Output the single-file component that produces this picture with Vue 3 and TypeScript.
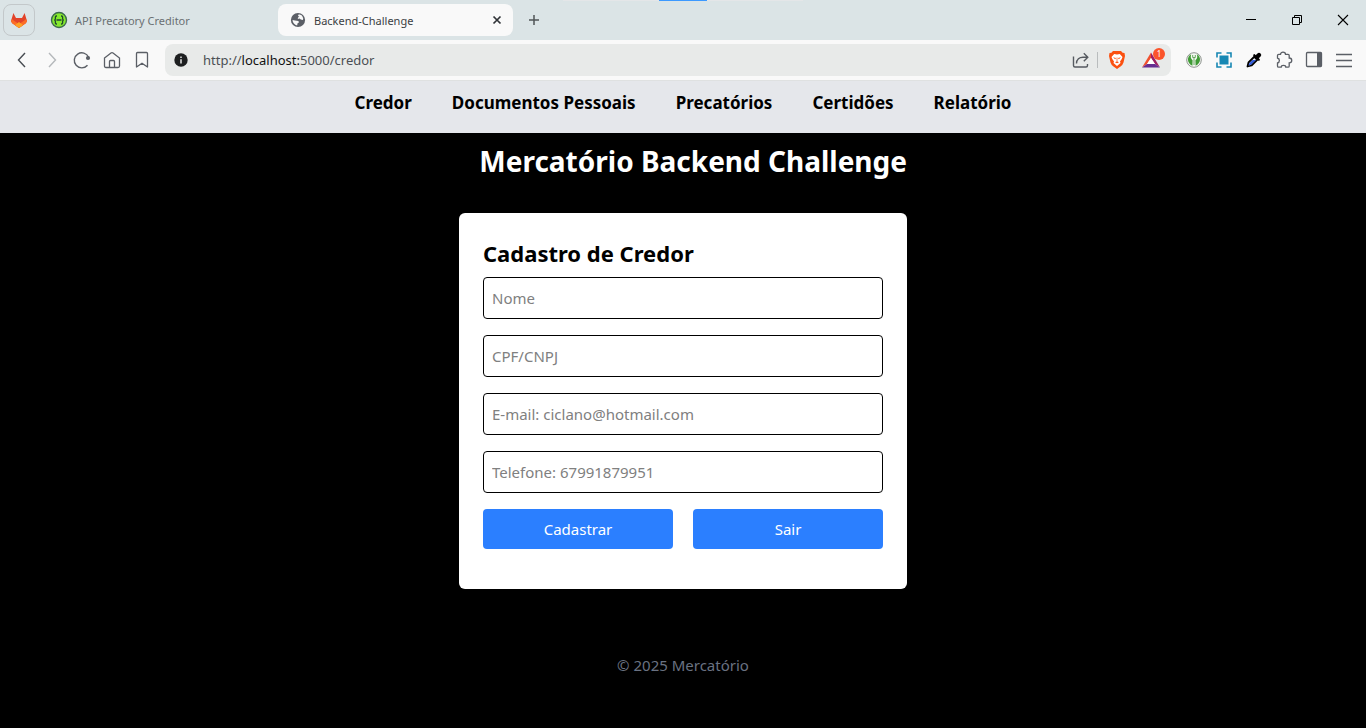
<script setup lang="ts">
import { ref } from 'vue'

interface Field {
  id: string
  type: string
  placeholder: string
}

const links: string[] = ['Credor', 'Documentos Pessoais', 'Precatórios', 'Certidões', 'Relatório']

const fields: Field[] = [
  { id: 'nome', type: 'text', placeholder: 'Nome' },
  { id: 'documento', type: 'text', placeholder: 'CPF/CNPJ' },
  { id: 'email', type: 'email', placeholder: 'E-mail: ciclano@hotmail.com' },
  { id: 'telefone', type: 'tel', placeholder: 'Telefone: 67991879951' },
]

const values = ref<Record<string, string>>({ nome: '', documento: '', email: '', telefone: '' })
</script>

<template>
  <div class="window">
    <header class="browser">
      <div class="tabstrip">
        <div class="loader"><span></span></div>
        <button class="pinned" type="button" aria-label="GitLab">
          <svg width="18" height="18" viewBox="0 0 18 18">
            <path d="M1 10 L3.4 2 L6 7 H12 L14.6 2 L17 10 L16 12 L9 17 L2 12Z" fill="#e24329" />
            <path d="M1 10 L2 8 L9 17 L2 12Z M17 10 L16 8 L9 17 L16 12Z" fill="#fc6d26" />
            <path d="M2 8.5 L9 13 L16 8.5 L16 12 L9 17 L2 12Z" fill="#fc6d26" />
            <path d="M5 14 L9 11 L13 14 L9 17Z" fill="#fca326" />
          </svg>
        </button>
        <button class="tab" type="button">
          <svg width="18" height="18" viewBox="0 0 18 18">
            <circle cx="9" cy="9" r="7.5" fill="#85ea2d" stroke="#3d6b4e" stroke-width="1.4" />
            <path d="M7 5 H6.4 Q5.4 5 5.4 6 V7.8 Q5.4 9 4.2 9 Q5.4 9 5.4 10.2 V12 Q5.4 13 6.4 13 H7 M11 5 H11.6 Q12.6 5 12.6 6 V7.8 Q12.6 9 13.8 9 Q12.6 9 12.6 10.2 V12 Q12.6 13 11.6 13 H11 M6.5 9 H11.5" fill="none" stroke="#22492f" stroke-width="1.3" />
          </svg>
          <span>API Precatory Creditor</span>
        </button>
        <div class="tab active">
          <svg width="16" height="16" viewBox="0 0 16 16">
            <circle cx="8" cy="8" r="7.1" fill="#5b5f66" />
            <path d="M8.5 2.6 C9.8 2.3 11.2 2.9 12.2 4 L13.2 6.3 L13 8 L10.8 7.5 L9.6 6.6 L7.8 6.9 L8 5.6 L9.4 4.8 L8 4Z M2.5 8 L5 8.4 L8.3 9 L9.1 10.3 L7.6 11.3 L7.1 13.4 C4.6 13 2.7 10.6 2.5 8Z" fill="#f9f9f9" />
          </svg>
          <span>Backend-Challenge</span>
          <button class="close" type="button" aria-label="Fechar guia">
            <svg width="10" height="10" viewBox="0 0 10 10"><path d="M1.5 1.5 L8.5 8.5 M8.5 1.5 L1.5 8.5" stroke="#303438" stroke-width="1.7" /></svg>
          </button>
        </div>
        <button class="newtab" type="button" aria-label="Nova guia">
          <svg width="12" height="12" viewBox="0 0 12 12"><path d="M6 1 V11 M1 6 H11" stroke="#505457" stroke-width="1.5" /></svg>
        </button>
        <div class="controls">
          <button type="button" aria-label="Minimizar">
            <svg width="12" height="12" viewBox="0 0 12 12"><path d="M1 5.5 H11" stroke="#000" /></svg>
          </button>
          <button type="button" aria-label="Restaurar">
            <svg width="12" height="12" viewBox="0 0 12 12"><path d="M1.5 3.5 H8.5 V10.5 H1.5Z M3.5 3.5 V1.5 H10.5 V8.5 H8.5" fill="none" stroke="#000" /></svg>
          </button>
          <button type="button" aria-label="Fechar">
            <svg width="12" height="12" viewBox="0 0 12 12"><path d="M1 1 L11 11 M11 1 L1 11" stroke="#000" stroke-width="1.1" /></svg>
          </button>
        </div>
      </div>

      <div class="toolbar">
        <div class="navigation">
          <button type="button" aria-label="Voltar">
            <svg width="20" height="20" viewBox="0 0 20 20"><path d="M13 3 L6.5 10 L13 17" fill="none" stroke="#484c52" stroke-width="1.4" /></svg>
          </button>
          <button type="button" aria-label="Avançar">
            <svg width="20" height="20" viewBox="0 0 20 20"><path d="M7 3 L13.5 10 L7 17" fill="none" stroke="#b5b8bb" stroke-width="1.4" /></svg>
          </button>
          <button type="button" aria-label="Recarregar">
            <svg width="20" height="20" viewBox="0 0 20 20"><path d="M15.5 15.2 A7.5 7.5 0 1 1 16.6 7.2" fill="none" stroke="#5b5f66" stroke-width="1.4" /><circle cx="16" cy="8" r="2.1" fill="#5b5f66" /></svg>
          </button>
          <button type="button" aria-label="Página inicial">
            <svg width="20" height="20" viewBox="0 0 20 20"><path d="M2.5 8 L9 3 Q10 2.3 11 3 L17.5 8 V16 Q17.5 17.5 16 17.5 H4 Q2.5 17.5 2.5 16Z M7.5 17.5 V11.5 Q7.5 10.5 8.5 10.5 H11.5 Q12.5 10.5 12.5 11.5 V17.5" fill="none" stroke="#5b5f66" stroke-width="1.3" /></svg>
          </button>
          <button type="button" aria-label="Favoritos">
            <svg width="20" height="20" viewBox="0 0 20 20"><path d="M4.5 17 V3.5 Q4.5 2.5 5.5 2.5 H14.5 Q15.5 2.5 15.5 3.5 V17 L10 13.2Z" fill="none" stroke="#5b5f66" stroke-width="1.3" stroke-linejoin="round" /></svg>
          </button>
        </div>
        <div class="address">
          <svg width="14" height="14" viewBox="0 0 14 14"><circle cx="7" cy="7" r="6.7" fill="#1d1f20" /><path d="M7 3.5 V5 M7 6.2 V10.5" stroke="#e8e9e8" stroke-width="1.5" /></svg>
          <span class="url">http://<b>localhost:</b>5000/credor</span>
          <button type="button" aria-label="Compartilhar">
            <svg width="20" height="20" viewBox="0 0 20 20"><path d="M2.5 6.5 V15.5 Q2.5 17 4 17 H15 Q16.5 17 16.5 15.5 V14 M5.5 13.5 C5.5 9.5 8.5 7.2 12 7.2 H16.5 M12.8 3.2 L16.8 7.2 L12.8 11.2" fill="none" stroke="#565a60" stroke-width="1.4" /></svg>
          </button>
          <i class="divider"></i>
          <button type="button" aria-label="Brave Shields">
            <svg width="18" height="20" viewBox="0 0 18 20">
              <path d="M5 1 H13 L14.6 2.8 L16.5 3 L17 6 L15.5 12.5 Q15 14.5 12.5 16.5 L9 19 L5.5 16.5 Q3 14.5 2.5 12.5 L1 6 L1.5 3 L3.4 2.8Z" fill="#fb5010" />
              <path d="M6.2 4 L9 4.5 L11.8 4 L14.5 7 L13.7 9 L12 11.6 L12.5 13 L9 16 L5.5 13 L6 11.6 L4.3 9 L3.5 7Z" fill="#fff" />
              <path d="M5 7.3 L8 8 L7.2 9.3Z M13 7.3 L10 8 L10.8 9.3Z M7 12.2 L9 11.2 L11 12.2 L9 13.2Z" fill="#fb5010" />
              <path d="M9 7.5 V11.2" stroke="#fb5010" stroke-width=".7" />
            </svg>
          </button>
          <button class="rewards" type="button" aria-label="Brave Rewards">
            <svg width="20" height="20" viewBox="0 0 20 20">
              <path d="M10 2.5 L1 17.5 L6 14 L10 8Z" fill="#f0502f" />
              <path d="M10 2.5 L19 17.5 L14 14 L10 8Z" fill="#9e1f63" />
              <path d="M1 17.5 H19 L14 14 H6Z" fill="#662d91" />
              <path d="M10 8 L14 14 H6Z" fill="#fff" />
            </svg>
            <span>1</span>
          </button>
        </div>
        <div class="extensions">
          <button type="button" aria-label="Extensão de senhas">
            <svg width="20" height="20" viewBox="0 0 20 20">
              <circle cx="10" cy="10" r="7.3" fill="#f4f7f2" stroke="#8f9490" />
              <path d="M7.2 4.3 C2.5 6.5 3 13.5 8.4 15.8 L8.6 10.2 Q5.8 8.2 7.2 4.3Z M12.8 4.3 C17.5 6.5 17 13.5 11.6 15.8 L11.4 10.2 Q14.2 8.2 12.8 4.3Z" fill="#3f9b35" />
              <path d="M8.7 5 V7.5 H11.3 V5 M10 7.5 V15" fill="none" stroke="#6aa860" stroke-width="1" />
            </svg>
          </button>
          <button type="button" aria-label="Captura de tela">
            <svg width="20" height="20" viewBox="0 0 20 20"><path d="M7.5 3 H3 V7.5 M12.5 3 H17 V7.5 M17 12.5 V17 H12.5 M7.5 17 H3 V12.5" fill="none" stroke="#1687b3" stroke-width="1.6" /><rect x="5.5" y="5.5" width="9" height="9" fill="#1687b3" /></svg>
          </button>
          <button type="button" aria-label="Conta-gotas">
            <svg width="20" height="20" viewBox="0 0 20 20"><path d="M3.5 16.5 L4.5 12.5 L10.5 6.5 L13.5 9.5 L7.5 15.5Z" fill="#e8edfc" stroke="#000" stroke-width="1.8" stroke-linejoin="round" /><path d="M5.5 13 L8.5 10 H12 L7 14.8 L4.4 15.6Z" fill="#315ad8" /><path d="M10.3 5.2 L14.8 9.7" stroke="#000" stroke-width="2.2" stroke-linecap="round" /><path d="M12.5 7.5 L15 5" stroke="#000" stroke-width="4.4" stroke-linecap="round" /></svg>
          </button>
          <button type="button" aria-label="Extensões">
            <svg width="20" height="20" viewBox="0 0 20 20"><path d="M3.5 5.5 Q3.5 4.3 4.7 4.3 H6.5 C6.5 1.4 11.5 1.4 11.5 4.3 H14 Q15.2 4.3 15.2 5.5 V8 C18.6 8 18.6 12.8 15.2 12.8 V16 Q15.2 17.2 14 17.2 H11.8 C11.8 14.8 7.2 14.8 7.2 17.2 H4.7 Q3.5 17.2 3.5 16 V13 C6 12.3 6 8.7 3.5 8Z" fill="none" stroke="#5b5f66" stroke-width="1.3" /></svg>
          </button>
          <button type="button" aria-label="Barra lateral">
            <svg width="20" height="20" viewBox="0 0 20 20"><rect x="2.5" y="2.5" width="15" height="14" rx="1" fill="none" stroke="#5b5f66" stroke-width="1.3" /><path d="M13 2.5 H17.5 V16.5 H13Z" fill="#5b5f66" /></svg>
          </button>
          <button type="button" aria-label="Menu">
            <svg width="20" height="20" viewBox="0 0 20 20"><path d="M2 4.5 H18 M2 10.5 H18 M2 16.5 H18" stroke="#5b5f66" stroke-width="1.4" /></svg>
          </button>
        </div>
      </div>
    </header>

    <nav class="menu">
      <a v-for="link in links" :key="link" href="#">{{ link }}</a>
    </nav>

    <main>
      <h1>Mercatório Backend Challenge</h1>
      <form class="card" @submit.prevent>
        <h2>Cadastro de Credor</h2>
        <input
          v-for="field in fields"
          :id="field.id"
          :key="field.id"
          v-model="values[field.id]"
          :type="field.type"
          :placeholder="field.placeholder"
          :aria-label="field.placeholder"
        />
        <div class="actions">
          <button type="submit">Cadastrar</button>
          <button type="button">Sair</button>
        </div>
      </form>
    </main>

    <footer>© 2025 Mercatório</footer>
  </div>
</template>

<style>
body {
  margin: 0;
  background: #000;
}
</style>

<style scoped>
* {
  box-sizing: border-box;
}

.window {
  min-height: 100vh;
  background: #000;
  font-family: "Noto Sans", "Open Sans", sans-serif;
  font-size: 15px;
}

button {
  padding: 0;
  border: 0;
  background: none;
  font: inherit;
  color: inherit;
}

svg {
  display: block;
  flex: none;
}

.tabstrip {
  position: relative;
  display: flex;
  align-items: center;
  height: 40px;
  padding-left: 3px;
  background: #dbe4e6;
  font-size: 11px;
}

.loader {
  position: absolute;
  top: 0;
  left: 50%;
  display: flex;
  justify-content: center;
  width: 240px;
  height: 1px;
  margin-left: -120px;
  background: #e4e6e8;
}

.loader span {
  width: 48px;
  background: #3c99ff;
}

.pinned {
  display: grid;
  place-items: center;
  width: 32px;
  height: 32px;
  border: 1px solid #c3c8ca;
  border-radius: 8px;
}

.tab {
  display: flex;
  align-items: center;
  gap: 7px;
  width: 243px;
  height: 32px;
  padding: 0 12px 0 15px;
  color: #6a7073;
}

.tab.active {
  gap: 8px;
  width: 235px;
  padding: 0 11px 0 12px;
  border-radius: 8px;
  background: #f9f9f9;
  color: #3b3e42;
}

.close {
  margin-left: auto;
}

.newtab {
  margin-left: 15px;
}

.controls {
  display: flex;
  margin-left: auto;
}

.controls button {
  display: grid;
  place-items: center;
  width: 46px;
  height: 40px;
}

.toolbar {
  display: flex;
  align-items: center;
  height: 41px;
  padding: 0 12px;
  border-bottom: 1px solid #dfe1e1;
  background: #f9f9f9;
}

.navigation,
.extensions {
  display: flex;
  gap: 10px;
}

.address {
  display: flex;
  flex: 1;
  align-items: center;
  height: 32px;
  margin: 0 13px;
  padding: 0 10px 0 9px;
  border-radius: 8px;
  background: #e8eae9;
}

.url {
  flex: 1;
  margin-left: 15px;
  font-size: 13px;
  color: #4b4f54;
}

.url b {
  font-weight: 400;
  color: #111;
}

.divider {
  width: 1px;
  height: 16px;
  margin: 0 10px 0 6px;
  background: #b9bcbd;
}

.rewards {
  position: relative;
  margin-left: 15px;
}

.rewards span {
  position: absolute;
  top: -2px;
  right: -4px;
  width: 12px;
  height: 12px;
  border-radius: 50%;
  background: #fb542b;
  color: #fff;
  font-size: 8px;
  line-height: 12px;
}

.menu {
  display: flex;
  flex-wrap: wrap;
  justify-content: center;
  gap: 40px;
  padding: 8px 16px 16px;
  background: #e5e7eb;
}

.menu a {
  color: #000;
  font-size: 17px;
  font-weight: 700;
  line-height: 28px;
  text-decoration: none;
}

main {
  max-width: 448px;
  margin: 0 auto;
  padding-top: 10px;
}

h1 {
  margin: 0 0 34px;
  color: #fff;
  font-size: 28px;
  font-weight: 700;
  line-height: 36px;
  text-align: right;
  white-space: nowrap;
}

.card {
  display: flex;
  flex-direction: column;
  gap: 16px;
  padding: 24px 24px 40px;
  border-radius: 6px;
  background: #fff;
}

h2 {
  margin: 0 0 -8px;
  color: #000;
  font-size: 22px;
  font-weight: 700;
  line-height: 32px;
}

input {
  width: 100%;
  height: 42px;
  padding: 8px;
  border: 1px solid #000;
  border-radius: 4px;
  background: #fff;
  color: #000;
  font: inherit;
}

input::placeholder {
  color: #808080;
  opacity: 1;
}

.actions {
  display: grid;
  grid-template-columns: 1fr 1fr;
  gap: 20px;
}

.actions button {
  height: 40px;
  border-radius: 4px;
  background: #2b7fff;
  color: #fff;
}

footer {
  padding: 64px 16px 50px;
  color: #6a7282;
  line-height: 24px;
  text-align: center;
}
</style>
